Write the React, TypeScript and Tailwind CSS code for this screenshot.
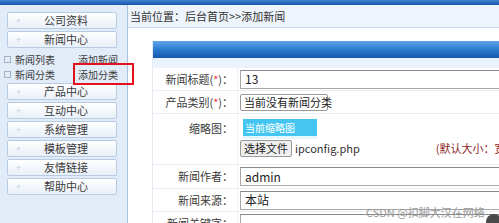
import React from "react";

const menuTop = ["公司资料", "新闻中心"];
const menuBottom = ["产品中心", "互动中心", "系统管理", "模板管理", "友情链接", "帮助中心"];

function MenuButton({ label }: { label: string }) {
  return (
    <div className="relative h-[17px] w-[110px] rounded-[2px] border border-[#b7cbe3] bg-gradient-to-b from-white to-[#e9f0f9] flex items-center justify-center pl-[8px] text-[11px] leading-none text-[#3a3a3a]">
      <span className="absolute left-[8px] top-[3px] text-[9px] leading-none text-[#c3d2e4]">+</span>
      {label}
    </div>
  );
}

function Row({
  label,
  required,
  h,
  children,
}: {
  label: string;
  required?: boolean;
  h: string;
  children: React.ReactNode;
}) {
  return (
    <div className={`flex ${h} border-b border-[#e9eef4]`}>
      <div className="w-[85px] shrink-0 flex items-center justify-end pr-[4px] text-[11px] leading-none text-[#3a3a3a] border-r border-[#eef2f7] whitespace-nowrap">
        <span>
          {label}
          {required && (
            <>
              (<span className="text-[#e33]">*</span>)
            </>
          )}
          ：
        </span>
      </div>
      <div className="flex-1 pl-[2px] flex items-center whitespace-nowrap">{children}</div>
    </div>
  );
}

function TextInput({ value }: { value: string }) {
  return (
    <div className="h-[19px] w-[300px] shrink-0 border border-[#a8a8a8] border-t-[#8a8a8a] bg-white flex items-center pl-[4px] text-[12px] leading-none text-[#222]">
      {value}
    </div>
  );
}

export default function App() {
  return (
    <div
      className="relative w-[499px] h-[223px] overflow-hidden bg-white"
      style={{ fontFamily: '"Noto Sans CJK SC", "Noto Sans", sans-serif' }}
    >
      <div className="h-[5px] bg-gradient-to-b from-[#3f84d2] to-[#1654a6]" />
      <div className="flex">
        <aside className="w-[128px] h-[218px] shrink-0 bg-[#e2ecf8] border-r border-[#a8c2df] pt-[7px] pl-[7px]">
          <div className="flex flex-col gap-[2px]">
            {menuTop.map((m) => (
              <MenuButton key={m} label={m} />
            ))}
          </div>
          <div className="pt-[4px] pb-[1px] -ml-[3px] w-[114px] text-[10px] leading-none text-[#3a3a3a] whitespace-nowrap">
            <div className="h-[15px] flex items-center justify-between">
              <span className="flex items-center gap-[4px]">
                <span className="inline-block w-[7px] h-[7px] border border-[#a3b1c2]" />
                新闻列表
              </span>
              <span>添加新闻</span>
            </div>
            <div className="h-[15px] flex items-center justify-between">
              <span className="flex items-center gap-[4px]">
                <span className="inline-block w-[7px] h-[7px] border border-[#a3b1c2]" />
                新闻分类
              </span>
              <span>添加分类</span>
            </div>
          </div>
          <div className="flex flex-col gap-[2px]">
            {menuBottom.map((m) => (
              <MenuButton key={m} label={m} />
            ))}
          </div>
        </aside>

        <main className="flex-1 min-w-0">
          <div className="h-[23px] bg-[#eef4fb] border-b border-[#c4d6ea] pl-[2px] flex items-center text-[11px] leading-none text-[#333] whitespace-nowrap">
            当前位置：后台首页&gt;&gt;添加新闻
          </div>
          <div className="pl-[24px] pt-[13px]">
            <div className="border-l border-[#e3eaf2]">
              <div className="h-[17px] bg-gradient-to-b from-[#5fa6ea] via-[#2a7bd0] to-[#1558ad]" />
              <div className="h-[10px] bg-[#eaf2fb]" />
              <Row label="新闻标题" required h="h-[23px]">
                <TextInput value="13" />
              </Row>
              <Row label="产品类别" required h="h-[23px]">
                <div className="h-[17px] w-[88px] shrink-0 border border-[#9a9a9a] rounded-[2px] bg-white flex items-center justify-between pl-[3px] pr-[2px] text-[11px] leading-none text-[#222]">
                  当前没有新闻分类
                  <svg width="8" height="6" viewBox="0 0 8 6">
                    <path d="M1 1.5 L4 4.5 L7 1.5" fill="none" stroke="#222" strokeWidth="1.4" />
                  </svg>
                </div>
              </Row>
              <div className="flex h-[51px] border-b border-[#e9eef4]">
                <div className="w-[85px] shrink-0 flex items-start justify-end pt-[9px] pr-[4px] text-[11px] leading-none text-[#3a3a3a] border-r border-[#eef2f7]">
                  缩略图：
                </div>
                <div className="flex-1 pl-[2px] pt-[5px] whitespace-nowrap">
                  <div className="ml-[3px] h-[20px] w-[74px] bg-[#45c6f2] text-white text-[10px] leading-none flex items-center pl-[2px] border-b-[3px] border-[#e6f6fd]">
                    当前缩略图
                  </div>
                  <div className="mt-[1px] flex items-center">
                    <div className="h-[17px] shrink-0 px-[3px] border border-[#9a9a9a] rounded-[2px] bg-[#efefef] text-[11px] leading-none text-[#222] flex items-center">
                      选择文件
                    </div>
                    <span className="ml-[3px] text-[11px] leading-none text-[#333]">ipconfig.php</span>
                    <span className="ml-[76px] text-[11px] leading-none text-[#8b1f1f]">
                      (默认大小：宽3
                    </span>
                  </div>
                </div>
              </div>
              <Row label="新闻作者" h="h-[24px]">
                <TextInput value="admin" />
              </Row>
              <Row label="新闻来源" h="h-[23px]">
                <TextInput value="本站" />
              </Row>
              <Row label="新闻关键字" h="h-[23px]">
                <TextInput value="" />
              </Row>
            </div>
          </div>
        </main>
      </div>

      <div className="absolute left-[73px] top-[63px] w-[61px] h-[22px] border-2 border-[#e3101e]" />

      <div className="absolute left-[366px] top-[204px] text-[11px] text-[#9a9a9a] whitespace-nowrap">
        CSDN @扣脚大汉在网络
      </div>
      <div className="absolute left-[486px] top-[214px] w-[16px] h-[16px] rounded-full bg-[#4a4a4a]" />
    </div>
  );
}
